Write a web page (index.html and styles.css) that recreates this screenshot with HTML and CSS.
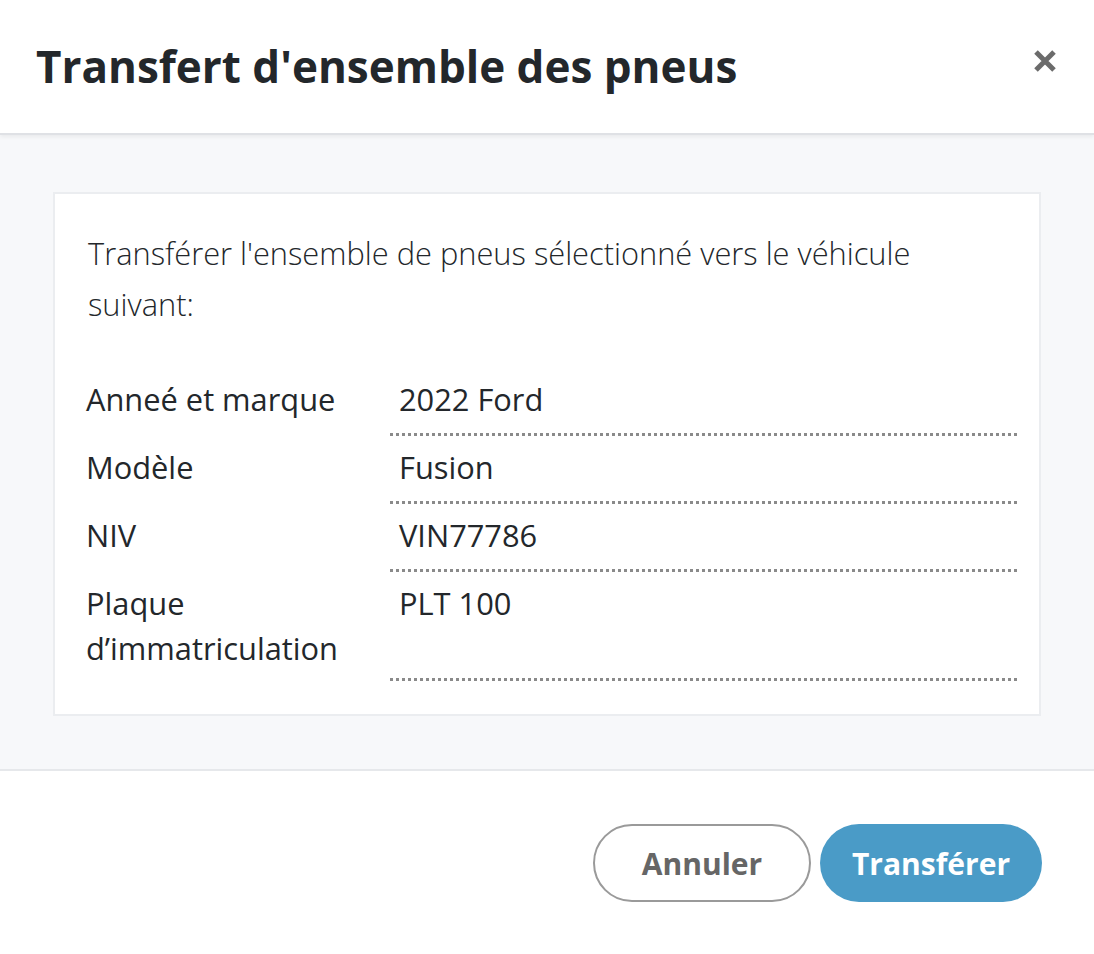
FILE: index.html
```html
<!DOCTYPE html>
<html lang="fr">
<head>
<meta charset="utf-8">
<link rel="stylesheet" href="styles.css">
</head>
<body>
<div class="modal">
  <header class="modal-header">
    <h1 class="title">Transfert d'ensemble des pneus</h1>
    <button class="close" aria-label="Fermer">
      <svg width="24" height="24" viewBox="0 0 24 24"><path d="M3 3 L21 21 M21 3 L3 21" stroke="#6b6b6b" stroke-width="5" stroke-linecap="butt"/></svg>
    </button>
  </header>
  <section class="modal-body">
    <div class="card">
      <p class="intro">Transférer l'ensemble de pneus sélectionné vers le véhicule suivant:</p>
      <div class="rows">
        <div class="row"><div class="label">Anneé et marque</div><div class="value">2022 Ford</div></div>
        <div class="row"><div class="label">Modèle</div><div class="value">Fusion</div></div>
        <div class="row"><div class="label">NIV</div><div class="value">VIN77786</div></div>
        <div class="row"><div class="label">Plaque d’immatriculation</div><div class="value">PLT 100</div></div>
      </div>
    </div>
  </section>
  <footer class="modal-footer">
    <button class="btn btn-outline">Annuler</button>
    <button class="btn btn-primary">Transférer</button>
  </footer>
</div>
</body>
</html>
```
FILE: styles.css
```css
* { box-sizing: border-box; }
html, body { margin: 0; padding: 0; background: #fff; }
body { font-family: "Open Sans", "Noto Sans", sans-serif; color: #212529; width: 1094px; height: 954px; overflow: hidden; }
.modal { display: flex; flex-direction: column; height: 954px; }
.modal-header {
  height: 135px; display: flex; align-items: flex-start; justify-content: space-between;
  padding: 36px 36px 0 36px; border-bottom: 2px solid #dfe1e5;
  box-shadow: 0 2px 4px rgba(0,0,0,0.06); position: relative; z-index: 1;
}
.title { margin: 0; font-size: 44px; font-weight: 700; line-height: 60px; color: #23272b; letter-spacing: 0; }
.close { background: none; border: 0; padding: 0; margin-top: 13px; margin-right: 1px; cursor: pointer; }
.close svg { display: block; }
.modal-body { background: #f7f8fa; padding: 57px 53px 53px 53px; border-bottom: 2px solid #e6e8eb; }
.card { background: #fff; border: 2px solid #ebedf0; padding: 34px 22px 33px 31px; }
.intro { margin: 0 0 38px 2px; font-size: 30.8px; font-weight: 300; line-height: 51px; color: #23272b; padding-right: 80px; }
.row { display: grid; grid-template-columns: 304px 1fr; }
.label { font-size: 30.8px; line-height: 45px; color: #23272b; padding: 9px 30px 10px 0; }
.value { font-size: 30.8px; line-height: 45px; color: #23272b; padding: 9px 0 10px 9px; min-height: 68px; border-bottom: 3px dotted #8a8a8a; }
.modal-footer { flex: 1; display: flex; justify-content: flex-end; align-items: flex-start; gap: 9px; padding: 53px 52px 0 0; }
.btn { height: 78px; border-radius: 39px; font-family: "Open Sans", sans-serif; font-size: 30px; font-weight: 700; padding: 0; cursor: pointer; }
.btn-outline { width: 218px; background: #fff; border: 2px solid #9a9a9a; color: #666; }
.btn-primary { width: 222px; background: #4a9bc7; border: 0; color: #fff; }
```
